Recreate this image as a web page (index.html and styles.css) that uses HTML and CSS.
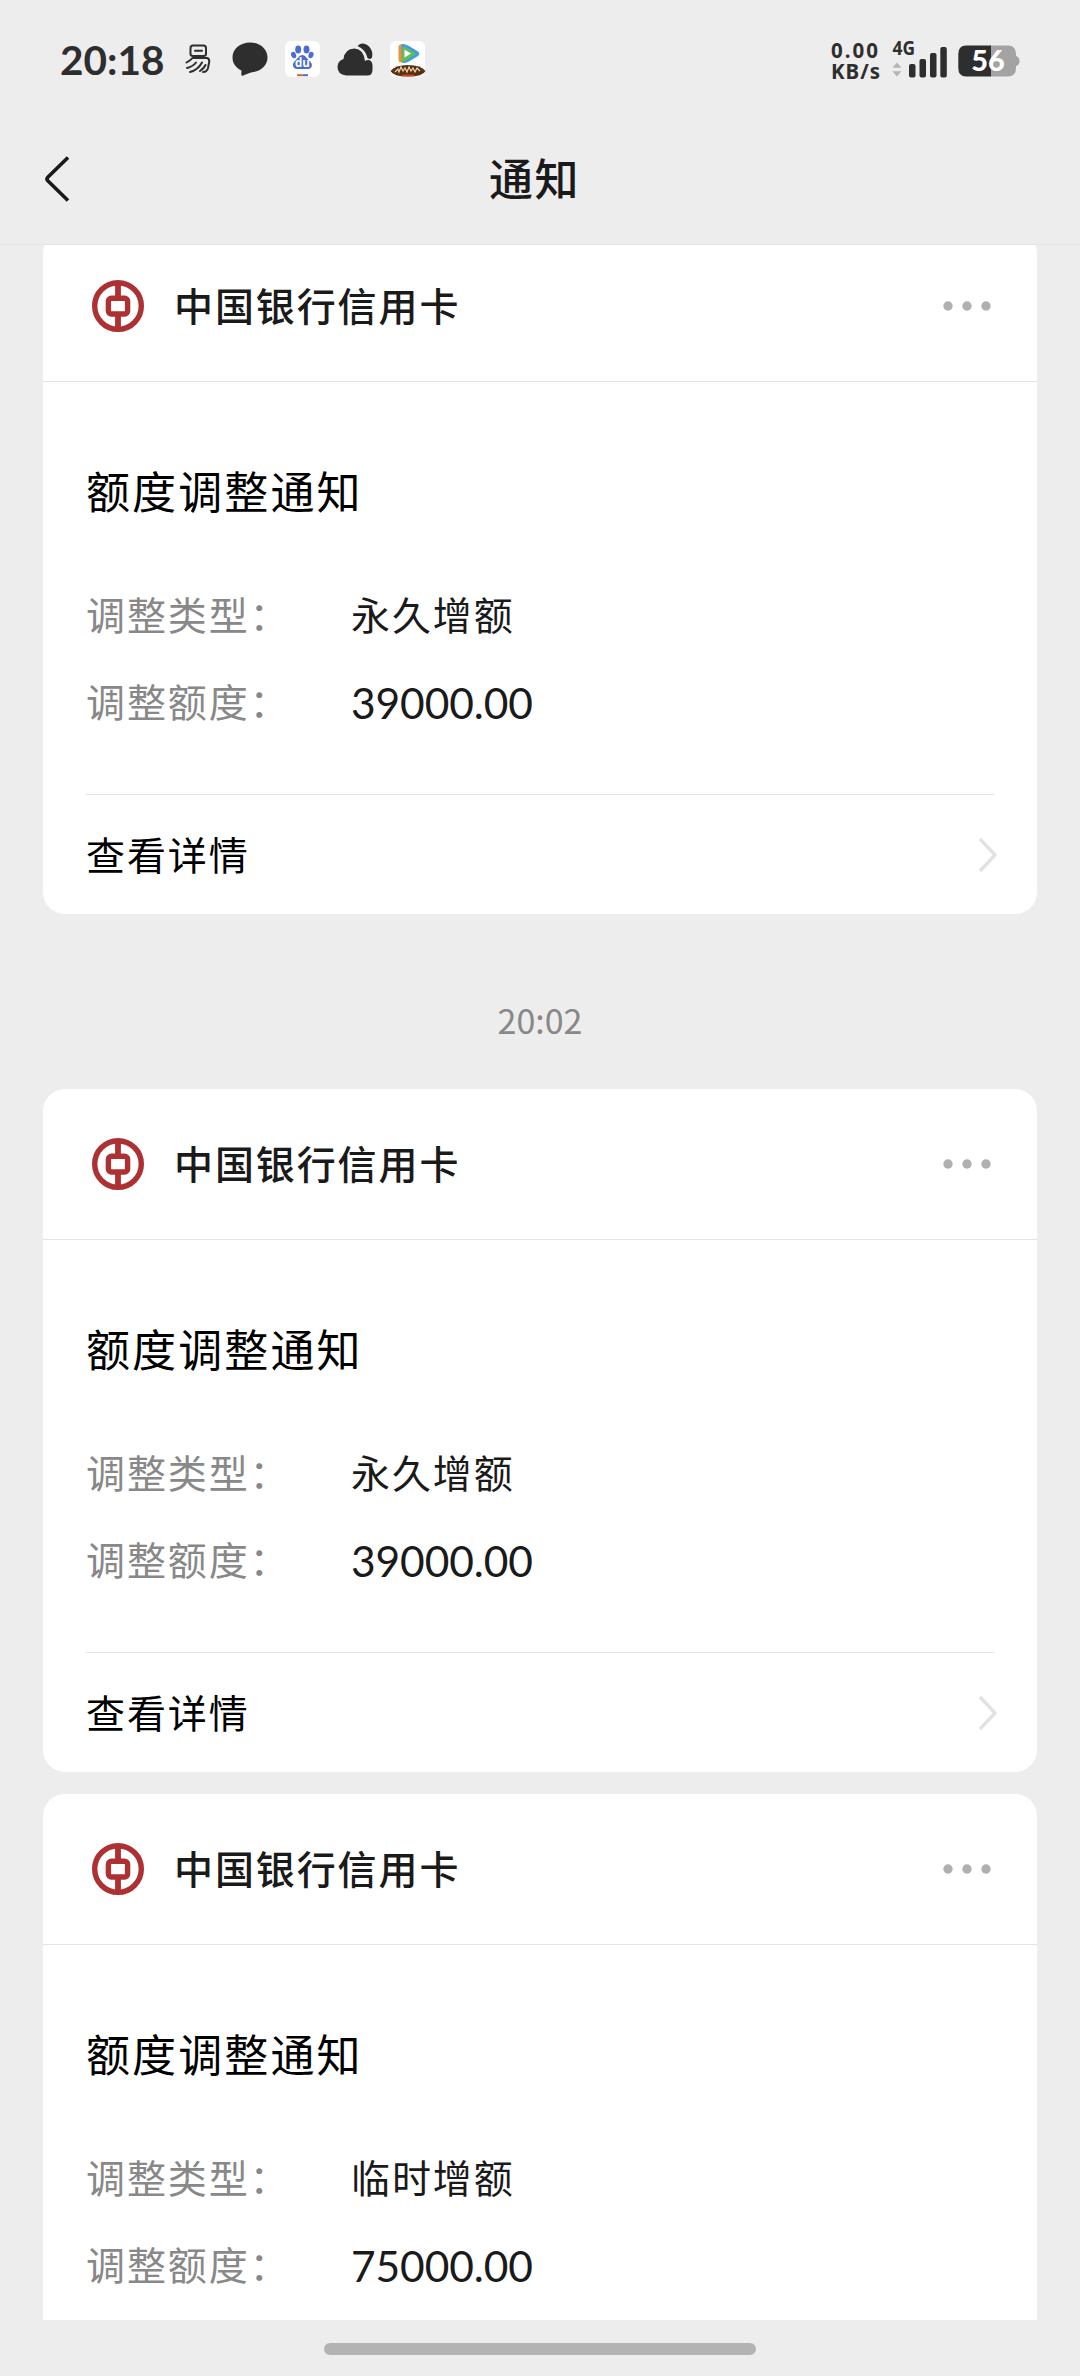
FILE: index.html
```html
<!DOCTYPE html>
<html lang="zh-CN">
<head>
<meta charset="utf-8">
<title>通知</title>
<link rel="stylesheet" href="styles.css">
</head>
<body>
<svg class="defs" width="0" height="0">
  <symbol id="boc" viewBox="0 0 54 54">
    <g fill="none" stroke="#ad3033">
      <circle cx="27" cy="27" r="23.3" stroke-width="5.4"/>
      <path d="M27 4v14M27 36v14" stroke-width="5.8"/>
      <rect x="17.4" y="19.2" width="19.2" height="15.8" rx="3" stroke-width="5.4"/>
    </g>
  </symbol>
  <symbol id="dots" viewBox="0 0 48 10">
    <g fill="#b0b0b0"><circle cx="5" cy="5" r="4.7"/><circle cx="24" cy="5" r="4.7"/><circle cx="43" cy="5" r="4.7"/></g>
  </symbol>
  <symbol id="chev" viewBox="0 0 20 36">
    <path d="M2 2L17 18L2 34" fill="none" stroke="#e2e2e2" stroke-width="3.4" stroke-linejoin="round"/>
  </symbol>
</svg>
<div class="screen">
  <header class="top">
    <div class="status">
      <span class="clock">20:18</span>
      <div class="apps">
        <svg width="26" height="30" viewBox="0 0 26 30" fill="none" stroke="#2e2e2e" stroke-width="2" stroke-linejoin="round" stroke-linecap="round">
          <path d="M5.500 4Q5.500 1.500 8 1.500H18.500Q21 1.500 21 4V10Q21 12 18.500 12H8Q5.500 12 5.500 10Z"/>
          <path d="M10 6.700h7"/>
          <path d="M1.500 18.500Q6 16 7.500 14H22Q24.500 14.500 24.200 18L23 24Q22 28 18 28"/>
          <path d="M11 18.500Q8 22.500 2 24M17 18.500Q13 26 5 28M20.500 21Q19 24.500 15 27"/>
        </svg>
        <svg width="36" height="35" viewBox="0 0 36 35"><path d="M18 0.500C27.800 0.500 35.500 7 35.500 15.500S27.800 30 19 30.500Q14 32 10 34Q9 33.500 9.500 28.500C4 26 .5 21.500 .5 15.500C.5 7 8.200 .5 18 .5Z" fill="#2e2e2e"/></svg>
        <svg width="35" height="36" viewBox="0 0 35 36">
          <rect width="35" height="36" rx="6" fill="#fff"/>
          <g fill="#4b6cd0">
            <ellipse cx="13.200" cy="8.500" rx="3" ry="4"/><ellipse cx="21.500" cy="8.500" rx="3" ry="4"/>
            <ellipse cx="8.600" cy="14" rx="2.500" ry="3.300" transform="rotate(-20 8.600 14)"/><ellipse cx="26" cy="14" rx="2.500" ry="3.300" transform="rotate(20 26 14)"/>
            <path d="M17.500 14C20 14 21.500 17 24 19.500C28.500 22.500 27.500 28 23 28H12C7.500 28 6.500 22.500 10.500 19.500C13 17 14.500 14 17.500 14Z"/>
          </g>
          <text x="17.500" y="26" class="du" text-anchor="middle">du</text>
          <path d="M12 34.200h5.500" stroke="#d2603f" stroke-width="2"/><path d="M17.500 34.200h5.500" stroke="#4b6cd0" stroke-width="2"/>
        </svg>
        <svg width="36" height="33" viewBox="0 0 36 33" fill="#2e2e2e">
          <path d="M9 32.500Q.5 31.500 .5 24Q.5 18 6.500 16Q7.500 6 17.500 5.500Q26.500 6 28 18Q30 16.500 32 17Q35.500 18 35.500 23V27Q35.500 32.500 30 32.500Z"/>
          <path d="M20.500 3Q25 -1.500 31 2.500Q36.500 7 35 14.500Q33.500 17 30.500 15Q28.500 6.500 20.500 3Z"/>
        </svg>
        <svg width="36" height="36" viewBox="0 0 36 36">
          <rect width="35" height="36" rx="6" fill="#fff"/>
          <path d="M12 3.200Q8.500 3 8.500 6.500V18Q8.500 22 12 21.500L13.500 21V3.500Z" fill="#f0912f"/>
          <path d="M11.500 3Q14.500 2.500 19 5L28 10.500Q30.500 12.500 28 15L19 20.500Q15 22.800 11.800 21.500Z" fill="#3d9fe0"/>
          <path d="M12.500 5.500Q15 6 18 7.800L26 12.700L19 17.500Q15 20.500 11.800 21.500Z" fill="#65bd55"/>
          <path d="M14.500 8.700L21 12.600L14.500 16.500Z" fill="#fff"/>
          <path d="M.5 30Q5 24 18 24T35.500 30Q33 35.500 18 35.500T.5 30Z" fill="#5a3013"/>
          <path d="M5 31l3-3 1 3 2-5 2 4 2-3 2 4 2-5 2 4 2-3 2 4 2-4 3 3" fill="none" stroke="#e9d6ac" stroke-width="1.200"/>
          <path d="M12 34.500h12" stroke="#d04528" stroke-width="1.800"/>
        </svg>
      </div>
      <div class="sys">
        <div class="speed"><span>0.00</span><span class="unit">KB/s</span></div>
        <svg class="signal" width="56" height="40" viewBox="0 0 56 40">
          <text x="0.500" y="15.500" class="net" textLength="22.500" lengthAdjust="spacingAndGlyphs">4G</text>
          <path d="M.5 28.800L5 23.500L9.500 28.800ZM.5 32.200L5 37.500L9.500 32.200Z" fill="#b5b5b5"/>
          <g fill="#2e2e2e"><rect x="17" y="25" width="6.500" height="13.500" rx="2"/><rect x="27.500" y="20" width="6.500" height="18.500" rx="2"/><rect x="38" y="14" width="6.500" height="24.500" rx="2"/><rect x="48.300" y="8" width="6.500" height="30.500" rx="2"/></g>
        </svg>
        <svg class="batt" width="62" height="32" viewBox="0 0 62 32">
          <path d="M32 .5H50Q58 .5 58 9V11Q61.500 12 61.500 16T58 21V23Q58 31.500 50 31.500H32Z" fill="#a3a3a3"/>
          <path d="M33 .5V31.500H8Q.3 31.500 .3 23V9Q.3 .5 8 .5Z" fill="#2e2e2e"/>
          <text x="30" y="25.700" text-anchor="middle" class="pct" textLength="33.500" lengthAdjust="spacingAndGlyphs">56</text>
        </svg>
      </div>
    </div>
    <nav class="nav">
      <svg class="back" width="28" height="48" viewBox="0 0 28 48"><path d="M25 2.500L4.800 22.300Q3.200 24 4.800 25.700L25 45.500" fill="none" stroke="#1a1a1a" stroke-width="3.600"/></svg>
      <h1 class="nav-title">通知</h1>
    </nav>
  </header>
  <main class="feed">
    <article class="card first">
      <div class="head"><svg class="logo"><use href="#boc"/></svg><span class="name">中国银行信用卡</span><svg class="dots"><use href="#dots"/></svg></div>
      <div class="body">
        <h2 class="title">额度调整通知</h2>
        <div class="row"><span class="label">调整类型：</span><span class="value">永久增额</span></div>
        <div class="row"><span class="label">调整额度：</span><span class="value num">39000.00</span></div>
      </div>
      <div class="foot"><span>查看详情</span><svg class="chev"><use href="#chev"/></svg></div>
    </article>
    <time class="time">20:02</time>
    <article class="card">
      <div class="head"><svg class="logo"><use href="#boc"/></svg><span class="name">中国银行信用卡</span><svg class="dots"><use href="#dots"/></svg></div>
      <div class="body">
        <h2 class="title">额度调整通知</h2>
        <div class="row"><span class="label">调整类型：</span><span class="value">永久增额</span></div>
        <div class="row"><span class="label">调整额度：</span><span class="value num">39000.00</span></div>
      </div>
      <div class="foot"><span>查看详情</span><svg class="chev"><use href="#chev"/></svg></div>
    </article>
    <article class="card next">
      <div class="head"><svg class="logo"><use href="#boc"/></svg><span class="name">中国银行信用卡</span><svg class="dots"><use href="#dots"/></svg></div>
      <div class="body">
        <h2 class="title">额度调整通知</h2>
        <div class="row"><span class="label">调整类型：</span><span class="value">临时增额</span></div>
        <div class="row"><span class="label">调整额度：</span><span class="value num">75000.00</span></div>
      </div>
    </article>
  </main>
  <footer class="home"><div class="pill"></div></footer>
</div>
</body>
</html>
```
FILE: styles.css
```css
* { box-sizing: border-box; }
body { margin: 0; background: #ededed; font-family: "Noto Sans CJK SC", sans-serif; }
.defs { display: block; height: 0; }
.screen { width: 1080px; height: 2376px; display: flex; flex-direction: column; overflow: hidden; }
.top { height: 245px; flex: none; border-bottom: 1px solid #e4e4e4; }
.status { height: 118px; padding: 0 60px 0 60px; display: flex; align-items: center; color: #2e2e2e; }
.clock { width: 125px; font: 700 40.500px/50px Lato, sans-serif; padding-top: 1px; }
.apps { display: flex; align-items: center; gap: 17px; }
.apps svg:first-child { margin-right: 4px; }
.du { font: 700 11.500px "Open Sans", sans-serif; fill: #fff; }
.sys { margin-left: auto; display: flex; align-items: center; }
.speed { width: 61px; margin-top: 3px; display: flex; flex-direction: column; font: 700 20.500px/21px "Noto Sans", sans-serif; letter-spacing: 2px; }
.unit { letter-spacing: 1px; }
.signal { overflow: visible; }
.net { font: 700 19px "Noto Sans", sans-serif; fill: #2e2e2e; }
.pct { font: 900 27.500px Lato, sans-serif; fill: #fff; }
.batt { margin-left: 10px; margin-top: 4px; }
.nav { height: 126px; display: grid; grid-template-columns: 92px 1fr 103px; align-items: center; }
.back { margin-left: 43px; margin-top: -4px; }
.nav-title { margin: -9px 0 0; text-align: center; font-size: 44px; font-weight: 500; line-height: 60px; letter-spacing: 1.500px; color: #1a1a1a; }
.feed { height: 2075px; flex: none; overflow: hidden; padding: 0 43px; display: flex; flex-direction: column; }
.card { background: #fff; border-radius: 22px; height: 683px; flex: none; display: flex; flex-direction: column; }
.first { margin-top: -14px; }
.next { margin-top: 22px; }
.head { height: 151px; border-bottom: 1px solid #e4e4e4; padding: 0 46px 0 48px; display: flex; align-items: center; }
.logo { width: 54px; height: 54px; }
.name { margin-left: 29px; margin-top: -5px; font-size: 39px; letter-spacing: 1.900px; font-weight: 500; line-height: 56px; color: #1a1a1a; }
.dots { width: 48px; height: 10px; margin-left: auto; }
.body { height: 412px; padding: 77px 43px 0; }
.title { margin: 0 0 48.500px; font-size: 44px; line-height: 62px; letter-spacing: 2.100px; font-weight: 400; color: #000; }
.row { height: 87px; display: flex; align-items: center; font-size: 39px; line-height: 56px; letter-spacing: 1.900px; }
.label { width: 265px; color: #888; }
.value { color: #1a1a1a; }
.num { font: 400 42.500px/56px Lato, sans-serif; letter-spacing: -.1px; padding-top: 5px; }
.foot { height: 120px; margin: 0 43px; border-top: 1px solid #e4e4e4; display: flex; align-items: center; justify-content: space-between; font-size: 39px; line-height: 56px; letter-spacing: 1.900px; color: #000; }
.foot span { margin-top: -3px; }
.chev { width: 20px; height: 36px; margin-right: -4px; }
.time { height: 175px; flex: none; text-align: center; font-size: 34px; line-height: 50px; padding-top: 81px; color: #888; }
.home { height: 56px; padding-top: 23px; }
.pill { width: 432px; height: 12px; border-radius: 6px; background: #b3b3b3; margin: 0 auto; }
```
